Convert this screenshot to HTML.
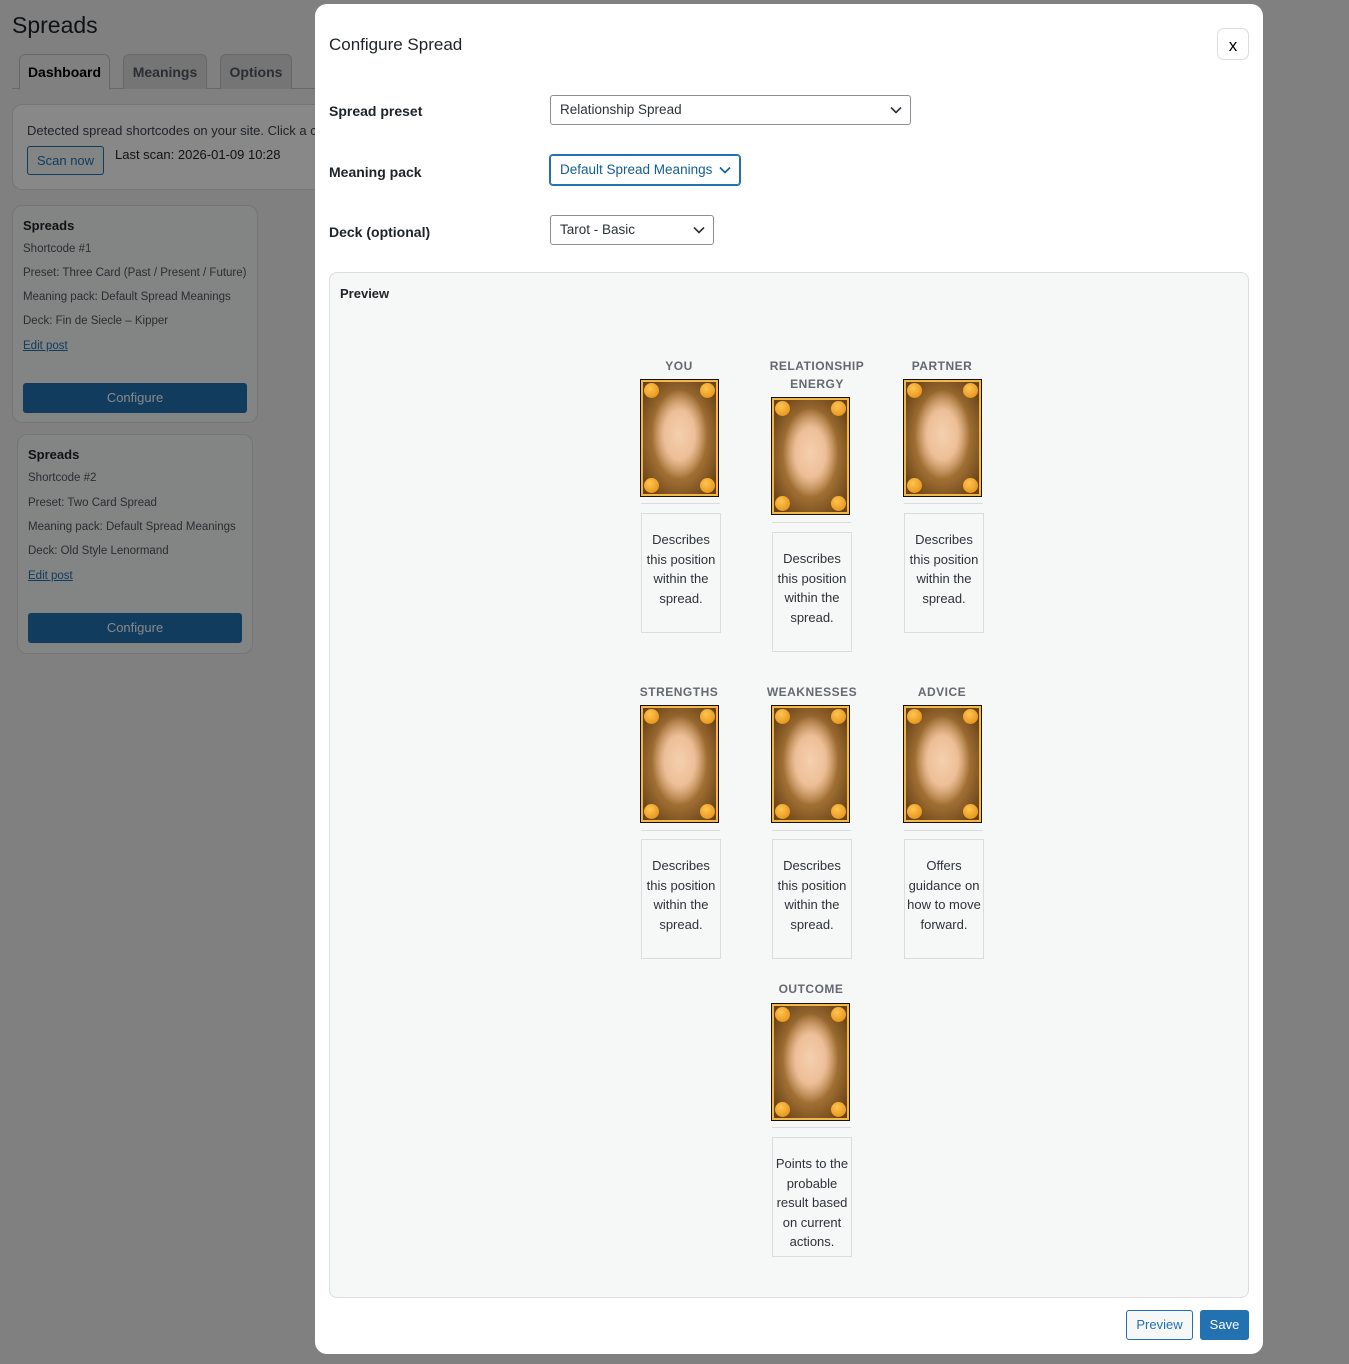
<!DOCTYPE html>
<html><head><meta charset="utf-8"><style>
*{box-sizing:border-box;margin:0;padding:0}
body{width:1349px;height:1364px;position:relative;overflow:hidden;font-family:"Liberation Sans",sans-serif;background:#f0f0f1;color:#1d2327}
.a{position:absolute}
.page{position:absolute;inset:0}
.tab{position:absolute;top:54px;height:35px;border:1px solid #c3c4c7;border-bottom:none;border-radius:6px 6px 0 0;background:#dcdcde;font-weight:bold;font-size:14px;color:#50575e;text-align:center;line-height:34px}
.box{position:absolute;background:#f6f7f7;border:1px solid #dcdcde;border-radius:10px}
.sc{font-size:11.5px;color:#50575e;position:absolute;left:0;white-space:nowrap}
.btnb{position:absolute;background:#2271b1;color:#fff;font-size:13px;text-align:center;line-height:30px;border-radius:3px}
.ov{position:absolute;inset:0;background:rgba(0,0,0,0.466)}
.modal{position:absolute;left:315px;top:4px;width:948px;height:1350px;background:#fff;border-radius:12px}
.lbl{position:absolute;left:14px;font-size:14px;font-weight:bold;color:#1d2327}
.sel{position:absolute;left:235px;height:30px;border:1px solid #8c8f94;border-radius:3px;font-size:13.5px;line-height:28px;padding-left:9px;color:#2c3338}
.sel svg{position:absolute;right:8px;top:10px}
.prev{position:absolute;left:14px;top:268px;width:920px;height:1026px;background:#f6f7f7;border:1px solid #dcdcde;border-radius:8px}
.cl{position:absolute;width:140px;text-align:center;font-size:12px;font-weight:bold;letter-spacing:.5px;color:#646970;line-height:18px}
.card{position:absolute;width:77px;height:116px;background:radial-gradient(ellipse 38% 40% at 50% 47%,#f4d0ae 0%,#eebf98 55%,rgba(214,160,100,0) 100%),radial-gradient(ellipse 62% 62% at 50% 50%,#c89850 0%,#9a6a30 65%,#6a4418 100%);border:2px solid #f0b848;box-shadow:0 0 0 1px #1a1008}
.card i{position:absolute;width:15px;height:15px;border-radius:50%;background:radial-gradient(circle at 40% 35%,#ffc450,#e0880c)}
.hr{position:absolute;width:79px;height:1px;background:#dcdcde}
.desc{position:absolute;width:80px;height:120px;border:1px solid #dcdcde;font-size:13px;line-height:19.5px;text-align:center;color:#2c3338;padding-top:16px;background:#f6f7f7}
</style></head><body>
<div class="page">
<div class="a" style="left:12px;top:12px;font-size:23px;color:#1d2327">Spreads</div>
<div class="a" style="left:12px;top:88px;width:340px;height:1px;background:#c3c4c7"></div>
<div class="tab" style="left:19px;width:91px;background:#f0f0f1;color:#000;height:36px">Dashboard</div>
<div class="tab" style="left:123px;width:84px">Meanings</div>
<div class="tab" style="left:220px;width:72px">Options</div>
<div class="box" style="left:12px;top:104px;width:400px;height:86px;background:#fff;border-radius:10px"></div>
<div class="a" style="left:27px;top:123px;font-size:13px;color:#3c434a;white-space:nowrap">Detected spread shortcodes on your site. Click a card</div>
<div class="a" style="left:27px;top:146px;width:77px;height:29px;border:1px solid #2271b1;border-radius:3px;color:#2271b1;font-size:13px;text-align:center;line-height:27px;background:#f6f7f7">Scan now</div>
<div class="a" style="left:115px;top:147px;font-size:13px;color:#1d2327">Last scan: 2026-01-09 10:28</div>
<div class="box" style="left:12px;top:205px;width:246px;height:218px">
<div class="a" style="left:10px;top:12px;font-size:13px;font-weight:bold">Spreads</div>
<div class="sc" style="left:10px;top:37px">Shortcode #1</div>
<div class="sc" style="left:10px;top:61px">Preset: Three Card (Past / Present / Future)</div>
<div class="sc" style="left:10px;top:85px">Meaning pack: Default Spread Meanings</div>
<div class="sc" style="left:10px;top:109px">Deck: Fin de Siecle – Kipper</div>
<div class="sc" style="left:10px;top:134px;color:#2271b1;text-decoration:underline">Edit post</div>
<div class="btnb" style="left:10px;top:177px;width:224px">Configure</div>
</div>
<div class="box" style="left:17px;top:434px;width:236px;height:220px">
<div class="a" style="left:10px;top:12px;font-size:13px;font-weight:bold">Spreads</div>
<div class="sc" style="left:10px;top:37px">Shortcode #2</div>
<div class="sc" style="left:10px;top:62px">Preset: Two Card Spread</div>
<div class="sc" style="left:10px;top:86px">Meaning pack: Default Spread Meanings</div>
<div class="sc" style="left:10px;top:110px">Deck: Old Style Lenormand</div>
<div class="sc" style="left:10px;top:135px;color:#2271b1;text-decoration:underline">Edit post</div>
<div class="btnb" style="left:10px;top:178px;width:214px">Configure</div>
</div>
</div>
<div class="ov"></div>
<div class="modal">
<div class="a" style="left:14px;top:31px;font-size:17px;color:#1d2327">Configure Spread</div>
<div class="a" style="left:902px;top:24px;width:32px;height:32px;border:1px solid #dcdcde;border-radius:7px;text-align:center;line-height:34px;font-size:17px;color:#000">x</div>
<div class="lbl" style="top:99px">Spread preset</div>
<div class="sel" style="top:91px;width:361px">Relationship Spread<svg width="12" height="8" viewBox="0 0 12 8"><path d="M1 1.5l5 5 5-5" fill="none" stroke="#2c3338" stroke-width="1.6"/></svg></div>
<div class="lbl" style="top:160px">Meaning pack</div>
<div class="sel" style="top:151px;width:190px;border-color:#2271b1;box-shadow:0 0 0 1px #2271b1;color:#135e96">Default Spread Meanings<svg width="12" height="8" viewBox="0 0 12 8" style="right:8px"><path d="M1 1.5l5 5 5-5" fill="none" stroke="#135e96" stroke-width="1.6"/></svg></div>
<div class="lbl" style="top:220px">Deck (optional)</div>
<div class="sel" style="top:211px;width:164px">Tarot - Basic<svg width="12" height="8" viewBox="0 0 12 8"><path d="M1 1.5l5 5 5-5" fill="none" stroke="#2c3338" stroke-width="1.6"/></svg></div>
<div class="prev"><div class="a" style="left:10px;top:13px;font-size:13px;font-weight:bold;color:#1d2327">Preview</div></div>

<div class="cl" style="left:294px;top:353px">YOU</div>
<div class="card" style="left:326px;top:376px"><i style="left:1px;top:1px"></i><i style="right:1px;top:1px"></i><i style="left:1px;bottom:1px"></i><i style="right:1px;bottom:1px"></i></div>
<div class="hr" style="left:326px;top:499px"></div>
<div class="desc" style="left:326px;top:509px">Describes this position within the spread.</div>

<div class="cl" style="left:432px;top:353px">RELATIONSHIP<br>ENERGY</div>
<div class="card" style="left:457px;top:394px"><i style="left:1px;top:1px"></i><i style="right:1px;top:1px"></i><i style="left:1px;bottom:1px"></i><i style="right:1px;bottom:1px"></i></div>
<div class="hr" style="left:457px;top:518px"></div>
<div class="desc" style="left:457px;top:528px">Describes this position within the spread.</div>

<div class="cl" style="left:557px;top:353px">PARTNER</div>
<div class="card" style="left:589px;top:376px"><i style="left:1px;top:1px"></i><i style="right:1px;top:1px"></i><i style="left:1px;bottom:1px"></i><i style="right:1px;bottom:1px"></i></div>
<div class="hr" style="left:589px;top:499px"></div>
<div class="desc" style="left:589px;top:509px">Describes this position within the spread.</div>

<div class="cl" style="left:294px;top:679px">STRENGTHS</div>
<div class="card" style="left:326px;top:702px"><i style="left:1px;top:1px"></i><i style="right:1px;top:1px"></i><i style="left:1px;bottom:1px"></i><i style="right:1px;bottom:1px"></i></div>
<div class="hr" style="left:326px;top:826px"></div>
<div class="desc" style="left:326px;top:835px">Describes this position within the spread.</div>

<div class="cl" style="left:427px;top:679px">WEAKNESSES</div>
<div class="card" style="left:457px;top:702px"><i style="left:1px;top:1px"></i><i style="right:1px;top:1px"></i><i style="left:1px;bottom:1px"></i><i style="right:1px;bottom:1px"></i></div>
<div class="hr" style="left:457px;top:826px"></div>
<div class="desc" style="left:457px;top:835px">Describes this position within the spread.</div>

<div class="cl" style="left:557px;top:679px">ADVICE</div>
<div class="card" style="left:589px;top:702px"><i style="left:1px;top:1px"></i><i style="right:1px;top:1px"></i><i style="left:1px;bottom:1px"></i><i style="right:1px;bottom:1px"></i></div>
<div class="hr" style="left:589px;top:826px"></div>
<div class="desc" style="left:589px;top:835px">Offers guidance on how to move forward.</div>

<div class="cl" style="left:426px;top:976px">OUTCOME</div>
<div class="card" style="left:457px;top:1000px"><i style="left:1px;top:1px"></i><i style="right:1px;top:1px"></i><i style="left:1px;bottom:1px"></i><i style="right:1px;bottom:1px"></i></div>
<div class="hr" style="left:457px;top:1123px"></div>
<div class="desc" style="left:457px;top:1133px">Points to the probable result based on current actions.</div>

<div class="a" style="left:811px;top:1306px;width:67px;height:30px;border:1px solid #2271b1;border-radius:3px;background:#f6f7f7;color:#2271b1;font-size:13px;text-align:center;line-height:28px">Preview</div>
<div class="a" style="left:885px;top:1306px;width:49px;height:30px;border-radius:3px;background:#2271b1;color:#fff;font-size:13px;text-align:center;line-height:30px">Save</div>
</div>
</body></html>
